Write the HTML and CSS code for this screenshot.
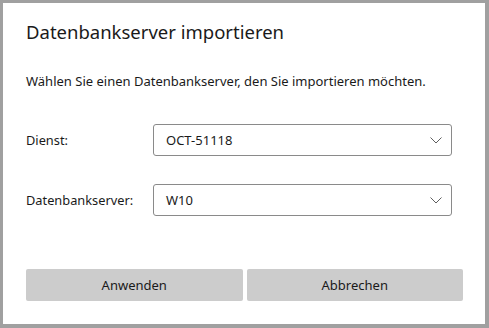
FILE: index.html
```html
<!DOCTYPE html>
<html lang="de">
<head>
<meta charset="utf-8">
<link rel="stylesheet" href="styles.css">
</head>
<body>
<div class="dialog">
  <h1 class="title">Datenbankserver importieren</h1>
  <p class="intro">Wählen Sie einen Datenbankserver, den Sie importieren möchten.</p>
  <div class="form">
    <label class="label">Dienst:</label>
    <div class="select">
      <span class="value">OCT-51118</span>
      <svg class="chev" width="12" height="7" viewBox="0 0 12 7"><path d="M0.5 0.5 L6 6 L11.5 0.5" fill="none" stroke="#5f5f5f" stroke-width="1"/></svg>
    </div>
    <label class="label">Datenbankserver:</label>
    <div class="select">
      <span class="value">W10</span>
      <svg class="chev" width="12" height="7" viewBox="0 0 12 7"><path d="M0.5 0.5 L6 6 L11.5 0.5" fill="none" stroke="#5f5f5f" stroke-width="1"/></svg>
    </div>
  </div>
  <div class="buttons">
    <button class="btn">Anwenden</button>
    <button class="btn">Abbrechen</button>
  </div>
</div>
</body>
</html>
```
FILE: styles.css
```css
html, body {
  margin: 0;
  padding: 0;
  height: 100%;
}
body {
  background: #a0a0a0;
  font-family: "Noto Sans", "Open Sans", sans-serif;
  color: #1a1a1a;
  padding: 3px 4px 4px 3px;
  box-sizing: border-box;
}
.dialog {
  background: #ffffff;
  height: 100%;
  box-sizing: border-box;
  padding: 17px 22px 0 23px;
  display: flex;
  flex-direction: column;
}
.title {
  margin: 0;
  font-size: 18.5px;
  line-height: 24px;
  font-weight: 400;
}
.intro {
  margin: 28px 0 0 0;
  font-size: 13px;
  line-height: 18px;
}
.form {
  margin-top: 34px;
  display: grid;
  grid-template-columns: 127px 299px;
  grid-auto-rows: 32px;
  row-gap: 28px;
  align-items: center;
}
.label {
  font-size: 12.8px;
}
.select {
  height: 32px;
  box-sizing: border-box;
  border: 1px solid #8a8a8a;
  border-radius: 3px;
  display: flex;
  align-items: center;
  justify-content: space-between;
  padding: 0 9px 0 12px;
  font-size: 13px;
}
.chev {
  display: block;
}
.buttons {
  margin-top: 53px;
  display: flex;
  gap: 4px;
}
.btn {
  flex: 1;
  height: 32px;
  border: none;
  border-radius: 2px;
  background: #cccccc;
  font-family: inherit;
  font-size: 13px;
  color: #1a1a1a;
  padding: 0;
}
```
